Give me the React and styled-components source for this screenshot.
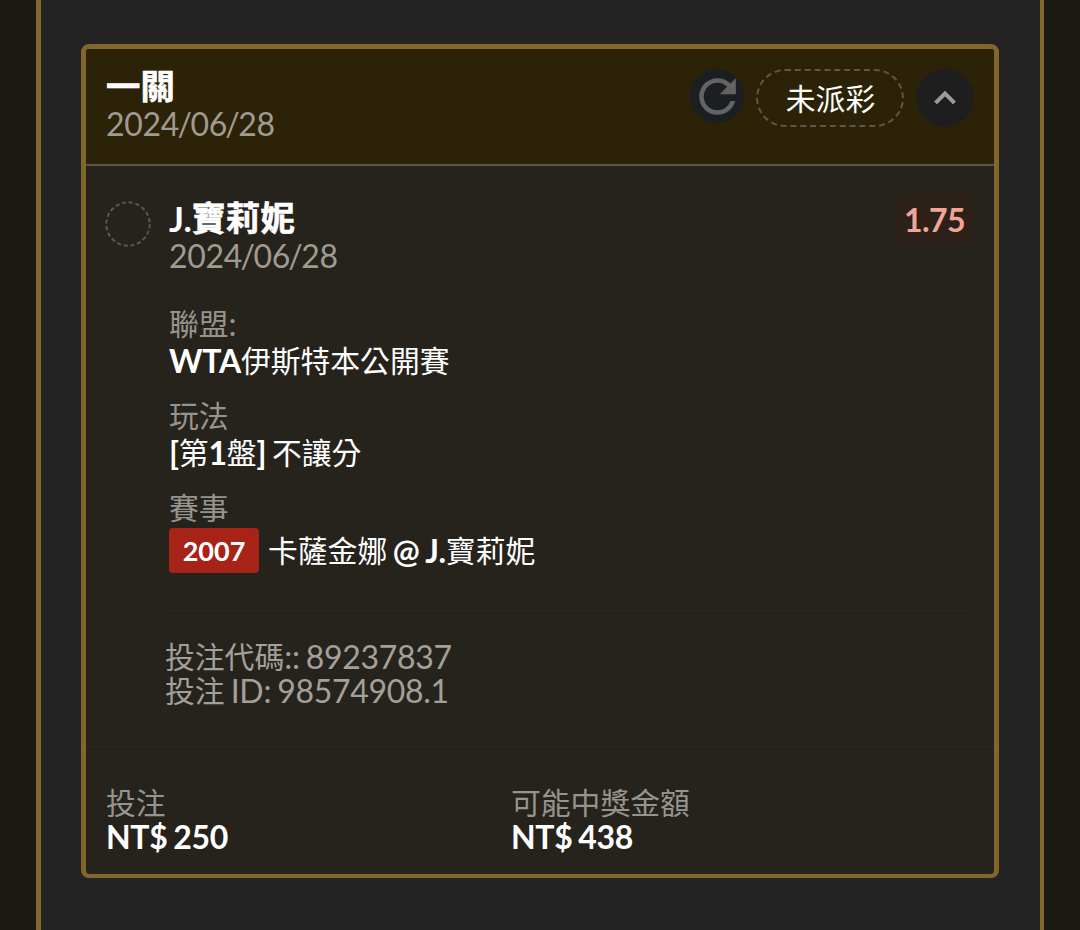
import React, { useState } from 'react';
import styled, { createGlobalStyle, css } from 'styled-components';
import { MdRefresh, MdKeyboardArrowUp } from 'react-icons/md';

const bet = {
  type: '一關',
  date: '2024/06/28',
  status: '未派彩',
  selection: 'J.寶莉妮',
  eventDate: '2024/06/28',
  odds: '1.75',
  code: '投注代碼:: 89237837',
  id: '投注 ID: 98574908.1',
};

const details = [
  { id: 1, label: '聯盟:', value: 'WTA伊斯特本公開賽' },
  { id: 2, label: '玩法', value: '[第1盤] 不讓分' },
  { id: 3, label: '賽事', value: '卡薩金娜 @ J.寶莉妮', tag: '2007' },
];

const amounts = [
  { id: 1, label: '投注', value: 'NT$ 250' },
  { id: 2, label: '可能中獎金額', value: 'NT$ 438' },
];

// chinese runs are set a little smaller than the latin ones
const Mixed = ({ text }) =>
  text
    .split(/([\u4e00-\u9fff]+)/)
    .map((part, i) => (i % 2 ? <Han key={i}>{part}</Han> : part));

const DateText = ({ value }) => (
  <Muted>
    {value.split(/(\/)/).map((part, i) => (i % 2 ? <Slash key={i}>{part}</Slash> : part))}
  </Muted>
);

function App() {
  const [open, setOpen] = useState(true);

  return (
    <>
      <GlobalStyle />
      <Panel>
        <Card>
          <Header>
            <div>
              <BetType>
                <Mixed text={bet.type} />
              </BetType>
              <DateText value={bet.date} />
            </div>
            <Actions>
              <RefreshButton aria-label="refresh">
                <MdRefresh />
              </RefreshButton>
              <Status>
                <Mixed text={bet.status} />
              </Status>
              <ToggleButton aria-label="toggle" onClick={() => setOpen(!open)}>
                <MdKeyboardArrowUp />
              </ToggleButton>
            </Actions>
          </Header>
          {open && (
            <Body>
              <Ring viewBox="0 0 46 46">
                <circle cx="23" cy="23" r="21.7" />
              </Ring>
              <Content>
                <TopRow>
                  <div>
                    <Selection>
                      <Mixed text={bet.selection} />
                    </Selection>
                    <DateText value={bet.eventDate} />
                  </div>
                  <Odds>{bet.odds}</Odds>
                </TopRow>
                <Details>
                  {details.map(({ id, label, value, tag }) => (
                    <div key={id}>
                      <Label>
                        <Mixed text={label} />
                      </Label>
                      <Value $tall={!!tag}>
                        {tag && <Tag>{tag}</Tag>}
                        <span>
                          <Mixed text={value} />
                        </span>
                      </Value>
                    </div>
                  ))}
                </Details>
                <Codes>
                  <p>
                    <Mixed text={bet.code} />
                  </p>
                  <p>
                    <Mixed text={bet.id} />
                  </p>
                </Codes>
              </Content>
            </Body>
          )}
          <Footer>
            {amounts.map(({ id, label, value }) => (
              <div key={id}>
                <Label>
                  <Mixed text={label} />
                </Label>
                <Amount>{value}</Amount>
              </div>
            ))}
          </Footer>
        </Card>
      </Panel>
    </>
  );
}

const GlobalStyle = createGlobalStyle`
* {
  box-sizing: border-box;
  margin: 0;
  padding: 0;
}
body {
  background: #1c1912;
  color: #fff;
  font-family: Lato, 'Noto Sans CJK TC', sans-serif;
  font-size: 32px;
  line-height: 34px;
  letter-spacing: -0.3px;
  word-spacing: -1.8px;
  overflow: hidden;
}
`;

const Han = styled.span`
  font-size: 29.8px;
  font-weight: 400;
  line-height: 1;
  letter-spacing: 0;
  vertical-align: 1px;
`;

const Slash = styled.span`
  margin-left: -1.6px;
  letter-spacing: -1.5px;
`;

const Panel = styled.main`
  height: 930px;
  margin: 0 36px;
  padding: 44px 40px 0;
  background: #232323;
  border: solid #82662a;
  border-width: 0 4px 0 5px;
`;

const Card = styled.section`
  display: flex;
  flex-direction: column;
  width: 918px;
  height: 834px;
  background: #26231d;
  border: solid #82662a;
  border-width: 5px 5px 4px;
  border-radius: 8px;
`;

const Header = styled.header`
  display: flex;
  justify-content: space-between;
  height: 117px;
  padding: 20px 20px 0 20px;
  background: #2c2208;
  border-bottom: 2px solid #5c5441;
  border-radius: 3px 3px 0 0;
`;

const heading = css`
  height: 38px;
  line-height: 34px;
  font-weight: 700;
  white-space: nowrap;
  ${Han} {
    font-size: 34.4px;
    font-weight: 700;
    -webkit-text-stroke: 0.6px #fff;
  }
`;

const BetType = styled.h2`
  ${heading}
  font-size: 34px;
`;

const Selection = styled.h3`
  ${heading}
  font-size: 35px;
`;

const Muted = styled.p`
  height: 34px;
  color: #9f9b91;
`;

const Actions = styled.div`
  display: flex;
  align-items: flex-start;
  gap: 12px;
`;

const RoundButton = styled.button`
  display: flex;
  align-items: center;
  justify-content: center;
  border: 0;
  border-radius: 50%;
  background: #1e1e1f;
  cursor: pointer;
`;

const RefreshButton = styled(RoundButton)`
  width: 54px;
  height: 54px;
  font-size: 55px;
  color: #636363;
  background: #1c1f21;
  svg {
    flex: none;
    margin-left: 1px;
  }
`;

const ToggleButton = styled(RoundButton)`
  width: 58px;
  height: 58px;
  font-size: 42px;
  color: #999;
  path:last-child {
    stroke: currentColor;
    stroke-width: 0.4;
  }
`;

const Status = styled.div`
  width: 148px;
  height: 58px;
  padding-left: 1px;
  border: 2px dashed #5e574a;
  border-radius: 29px;
  line-height: 55px;
  text-align: center;
`;

const Body = styled.div`
  display: flex;
  gap: 18px;
  height: 580px;
  padding: 35px 22px 0 19px;
`;

const Ring = styled.svg`
  flex: none;
  width: 46px;
  height: 46px;
  circle {
    fill: none;
    stroke: #5b5953;
    stroke-width: 1.9;
    stroke-dasharray: 4.2 2.62;
  }
`;

const Content = styled.div`
  flex: 1;
`;

const TopRow = styled.div`
  display: flex;
  justify-content: space-between;
  align-items: flex-start;
`;

const Odds = styled.strong`
  margin-top: -7px;
  padding: 0 7px 0 8px;
  height: 50px;
  line-height: 52px;
  letter-spacing: -0.6px;
  color: #f0a597;
  background: #2c2018;
  border-radius: 6px;
`;

const Details = styled.div`
  display: flex;
  flex-direction: column;
  gap: 20px;
  margin-top: 34px;
`;

const Label = styled.p`
  height: 36px;
  line-height: 34px;
  color: #96948e;
`;

const Value = styled.div`
  display: flex;
  align-items: center;
  gap: 9px;
  height: ${(props) => (props.$tall ? '45px' : '36px')};
  margin-top: ${(props) => (props.$tall ? '1px' : '0')};
  font-size: 32px;
  font-weight: 700;
  white-space: pre;
`;

const Tag = styled.span`
  width: 90px;
  height: 45px;
  line-height: 46px;
  letter-spacing: 0;
  text-align: center;
  font-size: 27px;
  background: #a72318;
  border-radius: 4px;
`;

const Codes = styled.div`
  margin-top: 37px;
  margin-right: 1px;
  padding-top: 29px;
  border-top: 1px solid #2b2822;
  color: #a3a09a;
  p {
    margin-left: -4px;
  }
`;

const Footer = styled.footer`
  display: grid;
  grid-template-columns: 405px 1fr;
  padding: 38px 20px 0;
  border-top: 2px solid #292620;
  ${Label} {
    height: 34px;
    line-height: 34px;
  }
`;

const Amount = styled.p`
  font-weight: 700;
`;

export default App;
